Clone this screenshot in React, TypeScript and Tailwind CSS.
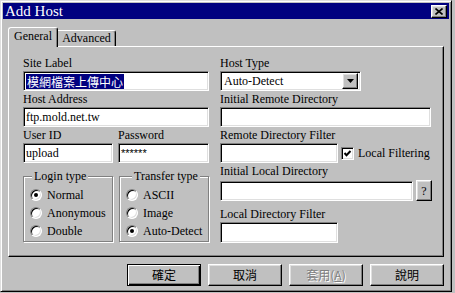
import React from "react"

const serif = "font-['Liberation_Serif','Noto_Sans_CJK_TC',serif]"
const cjk = "font-['Noto_Sans_CJK_TC',sans-serif]"

const sunken =
  "bg-white border border-t-[#808080] border-l-[#808080] border-r-white border-b-white shadow-[inset_1px_1px_0_#000,inset_-1px_-1px_0_#dfdfdf]"
const raised =
  "bg-[#c0c0c0] border border-t-white border-l-white border-r-black border-b-black shadow-[inset_-1px_-1px_0_#808080,inset_1px_1px_0_#dfdfdf]"

function Label({ children, h = "h-[16px]" }: { children: React.ReactNode; h?: string }) {
  return <div className={`${h} leading-[16px] text-[12px] whitespace-nowrap`}>{children}</div>
}

function Field({ value, className = "" }: { value?: React.ReactNode; className?: string }) {
  return (
    <div className={`${sunken} h-[20px] flex items-center pl-[2px] text-[12px] leading-[14px] ${className}`}>
      {value}
    </div>
  )
}

function Radio({ checked, label }: { checked?: boolean; label: string }) {
  return (
    <div className="h-[18px] flex items-center gap-[5px]">
      <span
        className={`w-[12px] h-[12px] rounded-full flex items-center justify-center ${sunken}`}
      >
        {checked && <span className="w-[4px] h-[4px] rounded-full bg-black" />}
      </span>
      <span className="text-[12px] leading-[14px]">{label}</span>
    </div>
  )
}

function GroupBox({
  title,
  offset,
  children,
}: {
  title: string
  offset: string
  children: React.ReactNode
}) {
  return (
    <div className="relative w-[90px] h-[66px] border border-[#808080] shadow-[1px_1px_0_#fff,inset_1px_1px_0_#fff] pl-[6px] pt-[9px]">
      <span
        className={`absolute -top-[8px] ${offset} px-[2px] bg-[#c0c0c0] text-[12px] leading-[14px] whitespace-nowrap`}
      >
        {title}
      </span>
      {children}
    </div>
  )
}

function Button({
  children,
  primary,
  disabled,
}: {
  children: React.ReactNode
  primary?: boolean
  disabled?: boolean
}) {
  const frame = primary
    ? "bg-[#c0c0c0] border border-black shadow-[inset_1px_1px_0_#fff,inset_-1px_-1px_0_#000,inset_-2px_-2px_0_#808080]"
    : raised
  return (
    <div
      className={`${frame} ${cjk} w-[74px] h-[22px] flex items-center justify-center text-[12px] leading-[14px] ${
        disabled ? "text-[#808080] [text-shadow:1px_1px_0_#fff]" : "text-black"
      }`}
    >
      {children}
    </div>
  )
}

export default function App() {
  return (
    <div className={`w-[455px] h-[293px] bg-[#c0c0c0] ${serif} text-black`}>
      <div className="w-[452px] h-[292px] flex flex-col p-[2px] border border-t-[#dfdfdf] border-l-[#dfdfdf] border-r-black border-b-black shadow-[inset_1px_1px_0_#fff,inset_-1px_-1px_0_#808080]">
        {/* title bar */}
        <div className="h-[16px] bg-[#000080] flex items-center justify-between pl-[2px] pr-[2px]">
          <span className="text-white text-[15px] leading-[16px]">Add Host</span>
          <div className={`${raised} w-[16px] h-[13px] flex items-center justify-center`}>
            <svg width="8" height="7" viewBox="0 0 8 7">
              <path d="M0.5 0.5 L7.5 6.5 M7.5 0.5 L0.5 6.5" stroke="#000" strokeWidth="1.6" />
            </svg>
          </div>
        </div>

        {/* tabs */}
        <div className="mt-[8px] ml-[5px] flex items-end h-[19px]">
          <div className="relative z-10 -mb-px w-[50px] h-[20px] bg-[#c0c0c0] border-l border-t border-r border-l-white border-t-white border-r-black rounded-t-[3px] shadow-[inset_-1px_0_0_#808080] text-[12px] leading-[14px] pt-[1px] text-center">
            General
          </div>
          <div className="w-[58px] h-[16px] border-t border-r border-t-white border-r-black rounded-tr-[3px] shadow-[inset_-1px_0_0_#808080] text-[12px] leading-[14px] text-center">
            Advanced
          </div>
        </div>

        {/* panel */}
        <div className="ml-[5px] w-[436px] h-[211px] border border-t-white border-l-white border-r-black border-b-black shadow-[inset_-1px_-1px_0_#808080] pt-[8px] pl-[14px] flex gap-[11px]">
          {/* left column */}
          <div className="w-[186px] flex flex-col">
            <Label>Site Label</Label>
            <Field
              value={
                <span className={`${cjk} bg-[#000080] text-white text-[12px] leading-[15px] h-[15px] px-px`}>
                  模網檔案上傳中心
                </span>
              }
            />
            <Label>Host Address</Label>
            <Field value="ftp.mold.net.tw" />
            <div className="flex gap-[5px]">
              <div className="w-[90px]">
                <Label>User ID</Label>
                <Field value="upload" />
              </div>
              <div className="w-[91px]">
                <Label>Password</Label>
                <Field value={<span className="font-['Liberation_Sans',sans-serif] text-[11px]">******</span>} />
              </div>
            </div>
            <div className="mt-[13px] flex gap-[6px]">
              <GroupBox title="Login type" offset="left-[8px]">
                <Radio checked label="Normal" />
                <Radio label="Anonymous" />
                <Radio label="Double" />
              </GroupBox>
              <GroupBox title="Transfer type" offset="left-[12px]">
                <Radio label="ASCII" />
                <Radio label="Image" />
                <Radio checked label="Auto-Detect" />
              </GroupBox>
            </div>
          </div>

          {/* right column */}
          <div className="w-[212px] flex flex-col">
            <Label>Host Type</Label>
            <div className={`${sunken} w-[141px] h-[20px] flex items-center justify-between pl-[3px] pr-[2px]`}>
              <span className="text-[12px] leading-[14px]">Auto-Detect</span>
              <div className={`${raised} w-[16px] h-[16px] flex items-center justify-center`}>
                <svg width="7" height="4" viewBox="0 0 7 4">
                  <path d="M0 0 H7 L3.5 4 Z" fill="#000" />
                </svg>
              </div>
            </div>
            <Label>Initial Remote Directory</Label>
            <Field className="w-[211px]" />
            <Label>Remote Directory Filter</Label>
            <div className="flex items-center">
              <Field className="w-[118px]" />
              <span className={`${sunken} ml-[3px] w-[13px] h-[13px] flex items-center justify-center`}>
                <svg width="9" height="9" viewBox="0 0 9 9">
                  <path d="M1.5 4 L3.5 6.2 L7.5 2" stroke="#000" strokeWidth="2" fill="none" />
                </svg>
              </span>
              <span className="ml-[4px] text-[12px] leading-[14px] whitespace-nowrap">Local Filtering</span>
            </div>
            <Label h="h-[17px]">Initial Local Directory</Label>
            <div className="flex items-end">
              <Field className="w-[193px]" />
              <div className={`${raised} ml-[3px] w-[16px] h-[21px] flex items-center justify-center text-[12px] leading-[14px]`}>
                ?
              </div>
            </div>
            <div className="mt-[5px]">
              <Label>Local Directory Filter</Label>
              <Field className="w-[118px] h-[21px]" />
            </div>
          </div>
        </div>

        {/* buttons */}
        <div className="mt-[7px] ml-[124px] flex gap-[7px]">
          <Button primary>確定</Button>
          <Button>取消</Button>
          <Button disabled>
            套用(<span className="underline">A</span>)
          </Button>
          <Button>說明</Button>
        </div>
      </div>
    </div>
  )
}
